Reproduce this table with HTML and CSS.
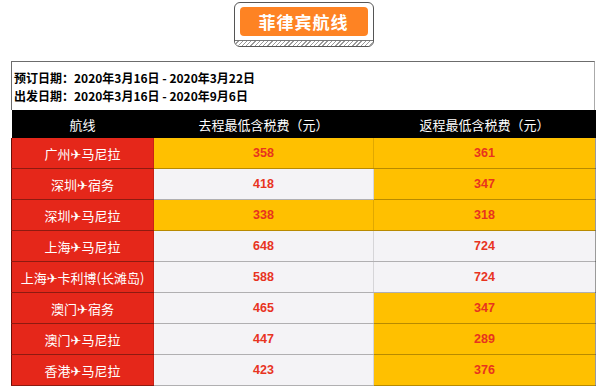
FILE: index.html
```html
<!DOCTYPE html>
<html lang="zh">
<head>
<meta charset="utf-8">
<link rel="stylesheet" href="styles.css">
</head>
<body>
<div class="title-wrap">
  <div class="title-btn">
    <div class="title-inner">菲律宾航线</div>
    <div class="hatch"></div>
  </div>
</div>
<div class="sheet">
  <div class="info">
    <div>预订日期：2020年3月16日 - 2020年3月22日</div>
    <div>出发日期：2020年3月16日 - 2020年9月6日</div>
  </div>
  <table class="fares">
    <colgroup><col class="c1"><col class="c2"><col class="c3"></colgroup>
    <thead>
      <tr><th>航线</th><th>去程最低含税费（元）</th><th>返程最低含税费（元）</th></tr>
    </thead>
    <tbody>
      <tr><td class="route">广州<span class="plane">✈</span>马尼拉</td><td class="y">358</td><td class="y">361</td></tr>
      <tr><td class="route">深圳<span class="plane">✈</span>宿务</td><td class="w">418</td><td class="y">347</td></tr>
      <tr><td class="route">深圳<span class="plane">✈</span>马尼拉</td><td class="y">338</td><td class="y">318</td></tr>
      <tr><td class="route">上海<span class="plane">✈</span>马尼拉</td><td class="w">648</td><td class="w">724</td></tr>
      <tr><td class="route">上海<span class="plane">✈</span>卡利博(长滩岛)</td><td class="w">588</td><td class="w">724</td></tr>
      <tr><td class="route">澳门<span class="plane">✈</span>宿务</td><td class="w">465</td><td class="y">347</td></tr>
      <tr><td class="route">澳门<span class="plane">✈</span>马尼拉</td><td class="w">447</td><td class="y">289</td></tr>
      <tr><td class="route">香港<span class="plane">✈</span>马尼拉</td><td class="w">423</td><td class="y">376</td></tr>
    </tbody>
  </table>
</div>
</body>
</html>
```
FILE: styles.css
```css
html, body {
  margin: 0;
  padding: 0;
  background: #ffffff;
  font-family: "Liberation Sans", "Noto Sans CJK SC", sans-serif;
}
.title-wrap {
  display: flex;
  justify-content: center;
  padding-top: 2px;
  padding-left: 7px;
  height: 61px;
  box-sizing: border-box;
}
.title-btn {
  width: 140px;
  height: 45px;
  box-sizing: border-box;
  border: 1.5px solid #555;
  border-radius: 6px;
  background: #fff;
  padding: 4px 5px 0 5px;
  display: flex;
  flex-direction: column;
  overflow: hidden;
}
.title-inner {
  height: 29px;
  background: #fe8323;
  border-radius: 4px;
  color: #fff;
  font-weight: bold;
  font-size: 17px;
  letter-spacing: 1px;
  display: flex;
  align-items: center;
  justify-content: center;
  font-family: "Noto Sans CJK SC", sans-serif;
}
.hatch {
  margin: 4px -5px 0 -5px;
  flex: 1;
  border-top: 1px solid #777;
  background: repeating-linear-gradient(135deg, #ffffff 0 2px, #9a9a9a 2px 3px);
}
.sheet {
  margin-left: 11px;
  width: 584px;
}
.info {
  border: 1px solid #6c6c6c;
  border-bottom: none;
  border-right-color: #aaa;
  height: 49px;
  box-sizing: border-box;
  padding: 7px 0 0 2px;
  font-size: 12px;
  font-weight: bold;
  color: #000;
  line-height: 18px;
  font-family: "Noto Sans CJK SC", sans-serif;
}
.fares {
  border-collapse: collapse;
  width: 584px;
  table-layout: fixed;
}
.c1 { width: 142px; }
.c2 { width: 220px; }
.c3 { width: 222px; }
.fares th {
  background: #000;
  color: #fff;
  font-weight: normal;
  font-size: 13px;
  height: 28px;
  padding: 0;
  font-family: "Noto Sans CJK SC", sans-serif;
}
.fares td {
  height: 30px;
  padding: 0;
  text-align: center;
  border-bottom: 1px solid rgba(0,0,0,0.28);
  border-left: 1px solid rgba(0,0,0,0.12);
}
.fares td.route {
  background: #e5271a;
  color: #fff;
  font-size: 13px;
  border-left: 1px solid #6b0f08;
  border-bottom: 1px solid #8e1a10;
  font-family: "Noto Sans CJK SC", sans-serif;
}
.plane {
  font-family: "DejaVu Sans", sans-serif;
  font-size: 13px;
}
.fares td.y, .fares td.w {
  color: #e8331f;
  font-weight: bold;
  font-size: 12.5px;
}
.fares td.y { background: #ffc000; }
.fares td.w { background: #f4f3f6; }
.fares td:last-child { border-right: 1px solid #9a9a9a; }
```
